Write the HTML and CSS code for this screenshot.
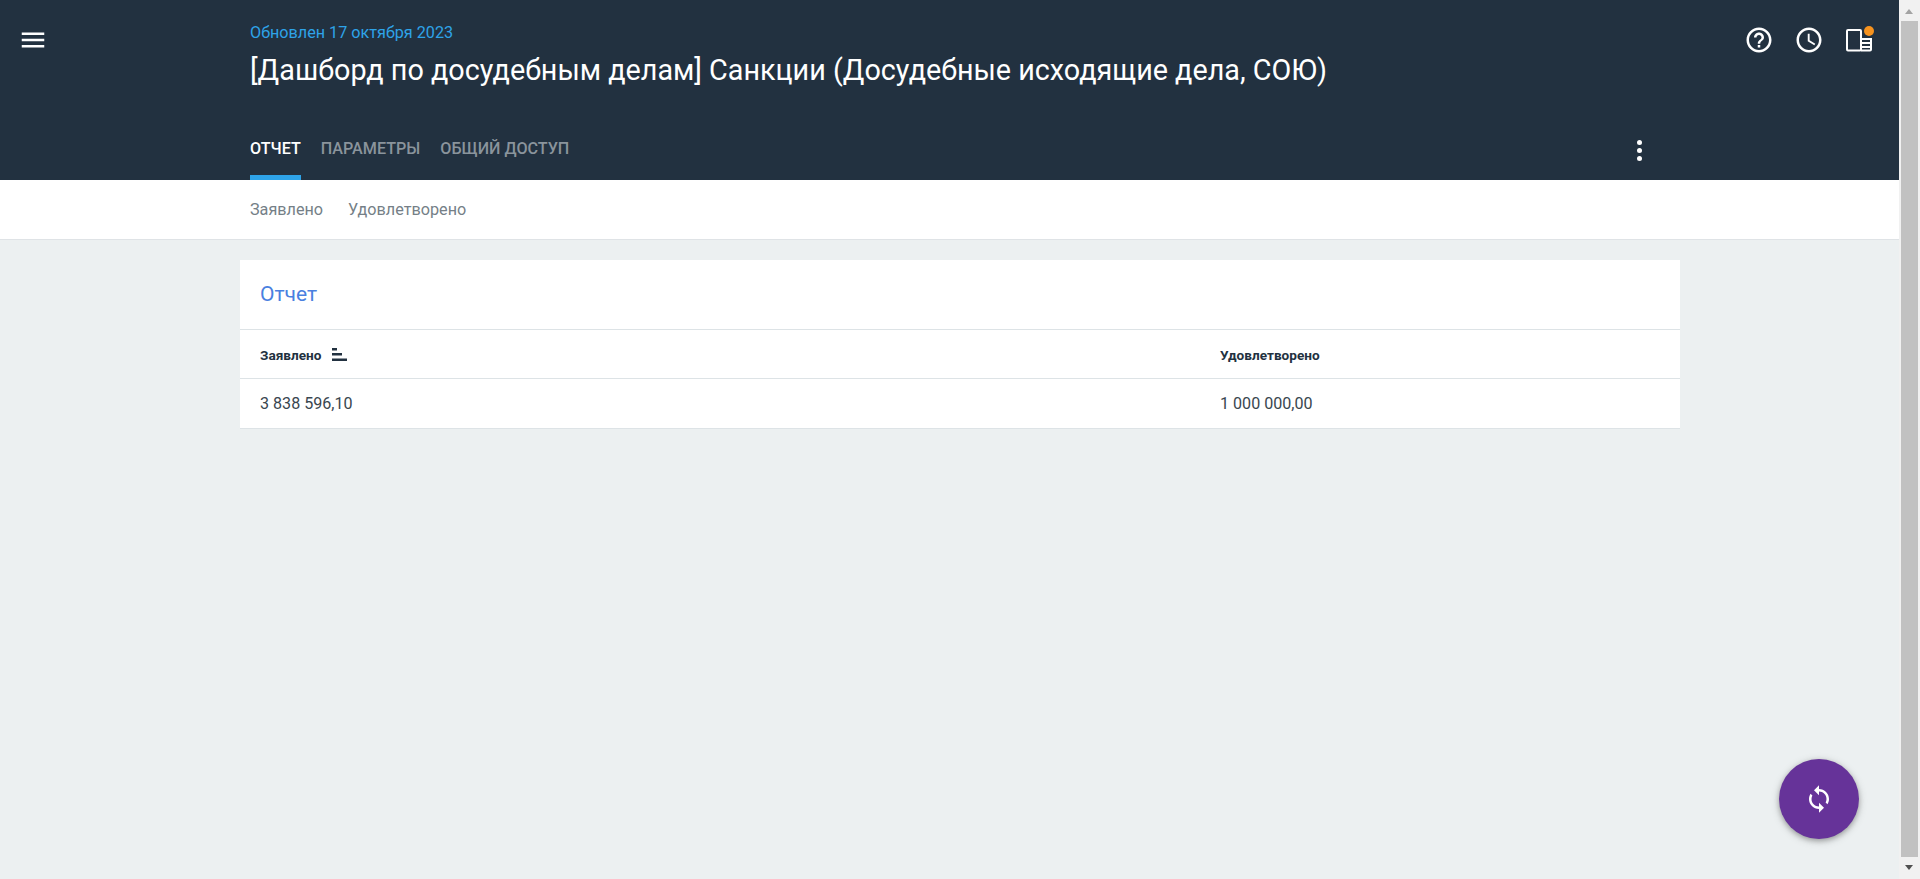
FILE: index.html
```html
<!DOCTYPE html>
<html lang="ru">
<head>
<meta charset="utf-8">
<title>Санкции</title>
<link rel="stylesheet" href="styles.css">
</head>
<body>
<div class="app">
  <main class="main">
    <header class="header">
      <button class="menu-btn" aria-label="Меню">
        <svg class="icon30" viewBox="0 0 24 24"><path fill="#fff" d="M3 18h18v-2H3v2zm0-5h18v-2H3v2zm0-7v2h18V6H3z"/></svg>
      </button>
      <div class="header-body">
        <div class="header-top">
          <div class="titles">
            <div class="updated">Обновлен 17 октября 2023</div>
            <h1 class="title">[Дашборд по досудебным делам] Санкции (Досудебные исходящие дела, СОЮ)</h1>
          </div>
        </div>
        <div class="tabs-row">
          <nav class="tabs">
            <a class="tab tab-active">ОТЧЕТ</a>
            <a class="tab">ПАРАМЕТРЫ</a>
            <a class="tab">ОБЩИЙ ДОСТУП</a>
          </nav>
          <div class="dots"><span></span><span></span><span></span></div>
        </div>
      </div>
      <div class="actions">
        <svg class="icon30" viewBox="0 0 24 24"><path fill="#fff" d="M11 18h2v-2h-2v2zm1-16C6.48 2 2 6.48 2 12s4.48 10 10 10 10-4.48 10-10S17.52 2 12 2zm0 18c-4.41 0-8-3.59-8-8s3.59-8 8-8 8 3.59 8 8-3.59 8-8 8zm0-14c-2.21 0-4 1.79-4 4h2c0-1.1.9-2 2-2s2 .9 2 2c0 2-3 1.75-3 5h2c0-2.25 3-2.5 3-5 0-2.21-1.79-4-4-4z"/></svg>
        <svg class="icon30" viewBox="0 0 24 24"><path fill="#fff" d="M11.99 2C6.47 2 2 6.48 2 12s4.47 10 9.99 10C17.52 22 22 17.52 22 12S17.52 2 11.99 2zM12 20c-4.42 0-8-3.58-8-8s3.58-8 8-8 8 3.58 8 8-3.58 8-8 8zm.5-13H11v6l5.25 3.15.75-1.23-4.5-2.67z"/></svg>
        <div class="panel-icon">
          <svg class="icon30" viewBox="0 0 30 30">
            <rect x="3" y="5" width="14" height="20.500" rx="1" fill="none" stroke="#fff" stroke-width="2"/>
            <path d="M17 25.500h9a1 1 0 0 0 1-1V13" fill="none" stroke="#fff" stroke-width="2"/>
            <path d="M18 14h9M18 18h9M18 22h9" stroke="#fff" stroke-width="2" fill="none"/>
          </svg>
          <span class="badge"></span>
        </div>
      </div>
    </header>
    <nav class="subnav">
      <a class="subnav-item">Заявлено</a>
      <a class="subnav-item">Удовлетворено</a>
    </nav>
    <section class="content">
      <div class="card">
        <h2 class="card-title">Отчет</h2>
        <div class="grid grid-head">
          <div class="cell"><span>Заявлено</span><svg class="sort" viewBox="0 0 15 13"><path fill="#223140" d="M0 0h5v2.500H0zM0 5h10v2.500H0zM0 10.500h15V13H0z"/></svg></div>
          <div class="cell">Удовлетворено</div>
        </div>
        <div class="grid grid-row">
          <div class="cell">3 838 596,10</div>
          <div class="cell">1 000 000,00</div>
        </div>
      </div>
    </section>
    <button class="fab" aria-label="Обновить">
      <svg class="icon30" viewBox="0 0 24 24"><path fill="#fff" d="M12 4V1L8 5l4 4V6c3.310 0 6 2.690 6 6 0 1.010-.25 1.970-.7 2.800l1.460 1.460C19.540 15.030 20 13.570 20 12c0-4.420-3.580-8-8-8zm0 14c-3.310 0-6-2.690-6-6 0-1.010.25-1.970.7-2.800L5.240 7.740C4.460 8.970 4 10.430 4 12c0 4.420 3.580 8 8 8v3l4-4-4-4v3z"/></svg>
    </button>
  </main>
  <aside class="scrollbar">
    <div class="arrow arrow-up"></div>
    <div class="thumb"></div>
    <div class="arrow arrow-down"></div>
  </aside>
</div>
</body>
</html>
```
FILE: styles.css
```css
* { box-sizing: border-box; }
html { scrollbar-width: none; }
html, body { margin: 0; }
body { font-family: Roboto, "Noto Sans", sans-serif; background: #ecf0f1; color: #223140; }
.app { display: flex; height: 879px; overflow: hidden; }
.main { position: relative; flex: 1; min-width: 0; display: flex; flex-direction: column; }

.header { height: 180px; flex: none; background: #223140; display: flex; position: relative; }
.menu-btn { width: 240px; padding: 25px 0 0 18px; border: 0; background: none; text-align: left; align-self: flex-start; }
.icon30 { width: 30px; height: 30px; display: block; }
.header-body { width: 1440px; padding: 0 10px; display: flex; flex-direction: column; }
.header-top { height: 130px; padding-top: 23px; }
.updated { font-size: 16.200px; line-height: 20px; color: #2ea3e8; }
.title { margin: 9px 0 0; font-size: 28.750px; line-height: 36px; font-weight: 400; color: #fff; }
.tabs-row { flex: 1; display: flex; justify-content: space-between; }
.tabs { display: flex; gap: 20px; }
.tab { height: 50px; padding-top: 9px; font-size: 16.150px; line-height: 20px; font-weight: 500; color: #8a949c; }
.tab-active { color: #fff; border-bottom: 5px solid #2ea3e8; }
.dots { width: 6px; margin: 10px 27px 0 0; display: flex; flex-direction: column; gap: 3px; }
.dots span { width: 5px; height: 5px; border-radius: 50%; background: #fff; }
.actions { position: absolute; top: 25px; left: 1744px; display: flex; gap: 20px; }
.panel-icon { position: relative; }
.badge { position: absolute; top: 1px; right: 0; width: 10px; height: 10px; border-radius: 50%; background: #f7931e; }

.subnav { height: 60px; flex: none; background: #fff; padding-left: 250px; border-bottom: 1px solid #dfe3e6; display: flex; align-items: center; gap: 25px; }
.subnav-item { font-size: 16.200px; color: #757f87; }

.content { padding: 20px 0 0 240px; }
.card { width: 1440px; background: #fff; border-bottom: 1px solid #dde3e6; }
.card-title { margin: 0; height: 69px; padding-left: 20px; font-size: 21px; line-height: 69px; font-weight: 400; color: #4a80e0; }
.grid { display: grid; grid-template-columns: 960px 1fr; padding-left: 20px; border-top: 1px solid #dde3e6; }
.grid-head { height: 49px; align-items: center; font-size: 13.600px; font-weight: 700; color: #223140; padding-top: 1px; }
.grid-row { height: 50px; align-items: center; font-size: 16.100px; color: #39464f; }
.cell { display: flex; align-items: center; gap: 11px; }
.sort { width: 15px; height: 13px; }

.fab { position: absolute; left: 1779px; top: 759px; width: 80px; height: 80px; border: 0; padding: 25px; border-radius: 50%; background: #663399; box-shadow: 0 2px 5px rgba(0,0,0,.26), 0 2px 10px rgba(0,0,0,.16); }

.scrollbar { width: 21px; background: #f1f1f1; display: flex; flex-direction: column; align-items: center; }
.thumb { flex: 1; width: 17px; background: #c1c1c1; }
.arrow { height: 21px; width: 17px; flex: none; position: relative; }
.arrow-up::after, .arrow-down::after { content: ""; position: absolute; left: 4px; border-left: 4.500px solid transparent; border-right: 4.500px solid transparent; }
.arrow-up::after { top: 9px; border-bottom: 5px solid #a3a3a3; }
.arrow-down { height: 22px; }
.arrow-down::after { top: 8px; border-top: 5px solid #505050; }
```
